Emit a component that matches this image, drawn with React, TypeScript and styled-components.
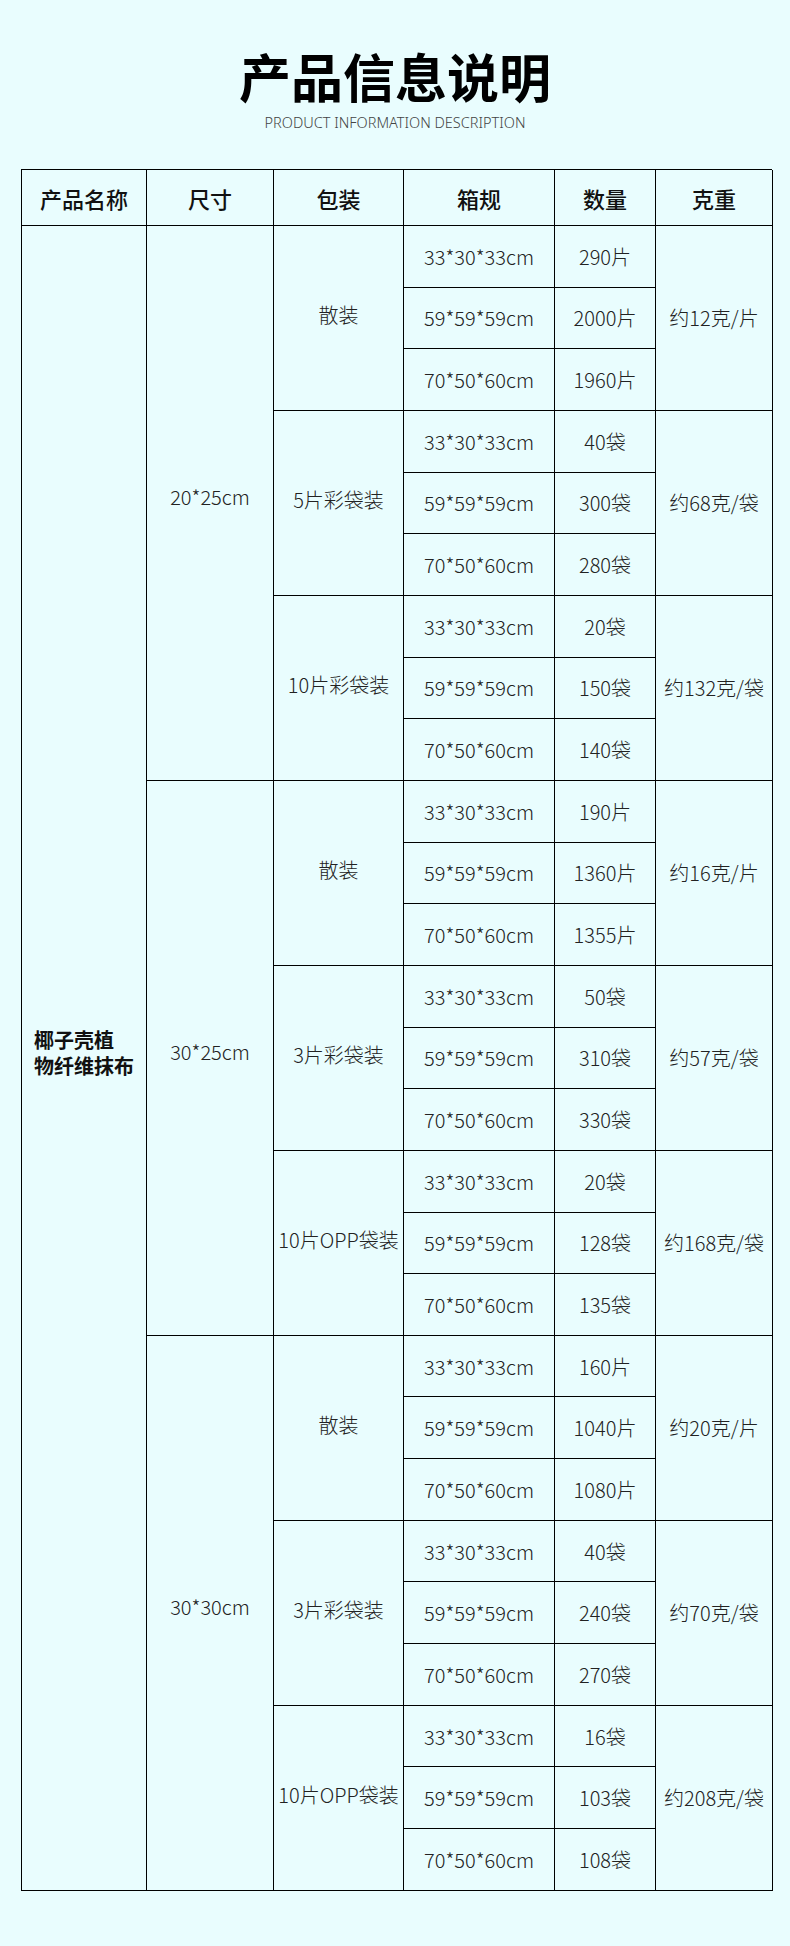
import React from "react";
import styled, { createGlobalStyle } from "styled-components";

const GlobalStyle = createGlobalStyle`
  html, body {
    margin: 0;
    padding: 0;
    background: #e9fdfe;
  }
  body {
    font-family: "Noto Sans CJK SC", "Noto Sans", sans-serif;
    color: #333;
  }
`;

const Page = styled.div`
  min-height: 1946px;
  padding-top: 50px;
  box-sizing: border-box;
`;

const Title = styled.h1`
  margin: 0;
  text-align: center;
  font-family: "Noto Sans CJK SC", sans-serif;
  font-size: 52px;
  line-height: 52px;
  font-weight: 700;
  color: #000;
`;

const SubTitle = styled.div`
  margin-top: 13px;
  text-align: center;
  font-family: "Noto Sans", sans-serif;
  font-weight: 300;
  font-size: 14.5px;
  line-height: 15px;
  color: #444;
`;

const Grid = styled.div`
  margin: 39px 0 0 21px;
  width: 751px;
  display: grid;
  grid-template-columns: 125px 127px 130px 151px 101px 117px;
  grid-template-rows: 56px repeat(27, 61.67px);
  border-top: 1px solid #000;
  border-left: 1px solid #000;
  box-sizing: border-box;
`;

const Cell = styled.div<{ $span?: number; $lift?: number }>`
  grid-row: span ${(p) => p.$span ?? 1};
  display: flex;
  align-items: center;
  justify-content: center;
  padding-bottom: ${(p) => p.$lift ?? 0}px;
  border-right: 1px solid #000;
  border-bottom: 1px solid #000;
  font-size: 20px;
  font-weight: 300;
  color: #222;
  white-space: nowrap;
  box-sizing: border-box;
`;

const HeadCell = styled(Cell)`
  font-size: 22px;
  font-weight: 500;
  color: #111;
`;

const NameCell = styled(Cell)`
  justify-content: flex-start;
  padding-left: 12px;
  font-size: 20px;
  line-height: 26px;
  font-weight: 700;
  color: #111;
  white-space: normal;
`;

type Pack = { name: string; qty: string[]; weight: string };
type Size = { size: string; packs: Pack[] };

const boxes = ["33*30*33cm", "59*59*59cm", "70*50*60cm"];

const data: Size[] = [
  {
    size: "20*25cm",
    packs: [
      { name: "散装", qty: ["290片", "2000片", "1960片"], weight: "约12克/片" },
      { name: "5片彩袋装", qty: ["40袋", "300袋", "280袋"], weight: "约68克/袋" },
      { name: "10片彩袋装", qty: ["20袋", "150袋", "140袋"], weight: "约132克/袋" },
    ],
  },
  {
    size: "30*25cm",
    packs: [
      { name: "散装", qty: ["190片", "1360片", "1355片"], weight: "约16克/片" },
      { name: "3片彩袋装", qty: ["50袋", "310袋", "330袋"], weight: "约57克/袋" },
      { name: "10片OPP袋装", qty: ["20袋", "128袋", "135袋"], weight: "约168克/袋" },
    ],
  },
  {
    size: "30*30cm",
    packs: [
      { name: "散装", qty: ["160片", "1040片", "1080片"], weight: "约20克/片" },
      { name: "3片彩袋装", qty: ["40袋", "240袋", "270袋"], weight: "约70克/袋" },
      { name: "10片OPP袋装", qty: ["16袋", "103袋", "108袋"], weight: "约208克/袋" },
    ],
  },
];

const headers = ["产品名称", "尺寸", "包装", "箱规", "数量", "克重"];

const App = () => {
  const cells: React.ReactNode[] = [];
  cells.push(
    <NameCell key="name" $span={27} $lift={10}>
      椰子壳植
      <br />
      物纤维抹布
    </NameCell>
  );
  data.forEach((s, si) => {
    s.packs.forEach((p, pi) => {
      boxes.forEach((b, bi) => {
        if (pi === 0 && bi === 0) {
          cells.push(
            <Cell key={`s${si}`} $span={9} $lift={12}>
              {s.size}
            </Cell>
          );
        }
        if (bi === 0) {
          cells.push(
            <Cell key={`p${si}-${pi}`} $span={3} $lift={6}>
              {p.name}
            </Cell>
          );
        }
        cells.push(<Cell key={`b${si}-${pi}-${bi}`}>{b}</Cell>);
        cells.push(<Cell key={`q${si}-${pi}-${bi}`}>{p.qty[bi]}</Cell>);
        if (bi === 0) {
          cells.push(
            <Cell key={`w${si}-${pi}`} $span={3}>
              {p.weight}
            </Cell>
          );
        }
      });
    });
  });

  return (
    <Page>
      <GlobalStyle />
      <Title>产品信息说明</Title>
      <SubTitle>PRODUCT INFORMATION DESCRIPTION</SubTitle>
      <Grid>
        {headers.map((h) => (
          <HeadCell key={h}>{h}</HeadCell>
        ))}
        {cells}
      </Grid>
    </Page>
  );
};

export default App;
